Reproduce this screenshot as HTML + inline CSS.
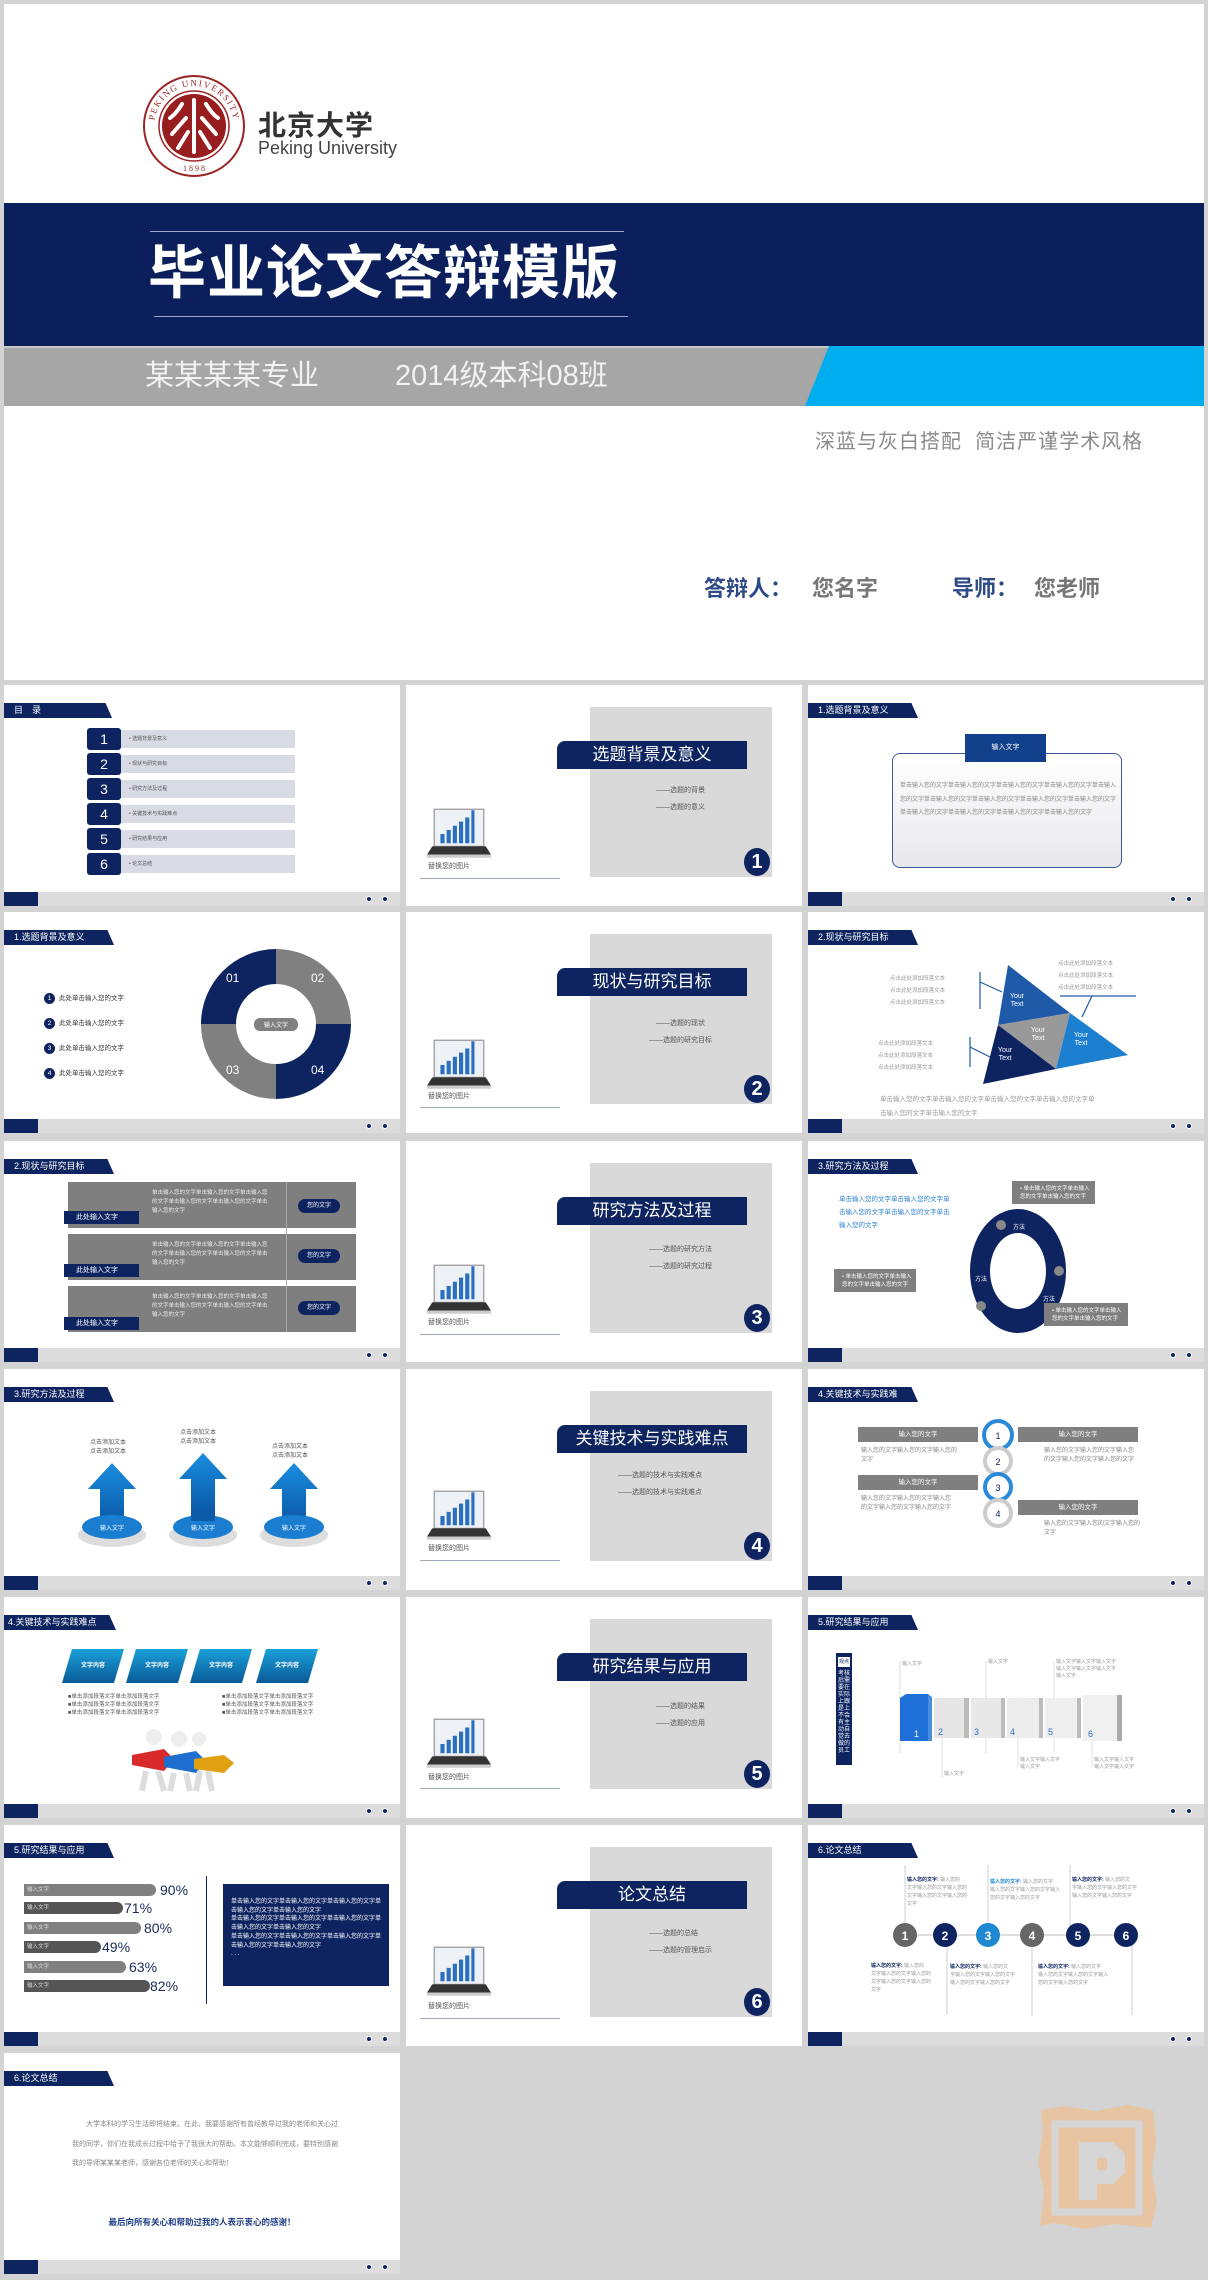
<!DOCTYPE html>
<html><head><meta charset="utf-8">
<style>
*{margin:0;padding:0;box-sizing:border-box}
body{width:1208px;height:2280px;background:#d3d3d3;position:relative;overflow:hidden;font-family:"Liberation Sans","Noto Sans CJK SC",sans-serif}
.a{position:absolute}
.t{position:absolute;width:396px;height:221px;background:#fff;overflow:hidden}
.hd{position:absolute;left:0;top:18px;height:15px;width:110px;background:#0d2460;color:#fff;font-size:9px;line-height:15px;padding-left:10px;clip-path:polygon(0 0,94% 0,100% 100%,0 100%);white-space:nowrap}
.ft{position:absolute;left:0;top:207px;width:396px;height:14px;background:#dcdcdc}
.ft:before{content:"";position:absolute;left:0;top:0;width:34px;height:14px;background:#0d2460}
.dot{position:absolute;top:4px;width:6px;height:6px;border-radius:50%;background:#0d2460;border:1px solid #fff}
.g{color:#888;font-size:6px;line-height:9px}
.w{color:#fff}
.nv{background:#0d2460}
.sec .gr{position:absolute;left:184px;top:22px;width:182px;height:170px;background:#d9d9d9}
.sec .tb{position:absolute;left:151px;top:56px;width:190px;height:28px;background:#0d2460;color:#fff;font-size:17px;line-height:28px;text-align:center;border-top-left-radius:8px}
.sec .si{position:absolute;left:240px;font-size:7px;color:#555}
.sec .nc{position:absolute;left:338px;top:163px;width:26px;height:28px;border-radius:50%;background:#0d2460;color:#fff;font-size:20px;font-weight:bold;text-align:center;line-height:28px}
.sec .cap{position:absolute;left:22px;top:176px;font-size:7px;color:#555}
.sec .ln{position:absolute;left:14px;top:193px;width:140px;height:1px;background:#a0a8c0}
</style></head><body>

<div class="a" style="left:4px;top:4px;width:1200px;height:676px;background:#fff">
  <svg class="a" style="left:138px;top:70px" width="104" height="104" viewBox="0 0 104 104">
    <defs><path id="arcT" d="M12 52 A40 40 0 0 1 92 52"/><path id="arcB" d="M20 60 A33 33 0 0 0 84 60"/></defs>
    <circle cx="52" cy="52" r="50" fill="#fff" stroke="#9b2424" stroke-width="2"/>
    <circle cx="52" cy="52" r="35" fill="#fff" stroke="#9b2424" stroke-width="1.5"/>
    <circle cx="52" cy="52" r="32" fill="#981d1f"/>
    <g stroke="#fff" stroke-width="4" fill="none" stroke-linecap="round">
      <path d="M52 26 V78"/><path d="M40 30 Q34 40 28 44"/><path d="M64 30 Q70 40 76 44"/>
      <path d="M44 44 L30 60"/><path d="M60 44 L74 60"/><path d="M46 58 L36 74"/><path d="M58 58 L68 74"/>
    </g>
    <text font-size="9" fill="#9b2424" font-family="Liberation Serif" letter-spacing="1.5"><textPath href="#arcT" startOffset="50%" text-anchor="middle">PEKING UNIVERSITY</textPath></text>
    <text x="52" y="97" font-size="8" fill="#9b2424" text-anchor="middle" font-family="Liberation Serif">1 8 9 8</text>
  </svg>
  <div class="a" style="left:254px;top:100px;font-size:28px;font-weight:bold;color:#333;letter-spacing:1px">北京大学</div>
  <div class="a" style="left:254px;top:134px;font-size:18px;color:#444">Peking University</div>
  <div class="a nv" style="left:0;top:199px;width:1200px;height:143px;background:#0b1f5c"></div>
  <div class="a" style="left:146px;top:227px;width:474px;height:1px;background:#9aa6c8"></div>
  <div class="a" style="left:150px;top:312px;width:474px;height:1px;background:#9aa6c8"></div>
  <div class="a" style="left:144px;top:234px;font-size:58px;font-weight:bold;color:#fff;letter-spacing:1px;line-height:72px">毕业论文答辩模版</div>
  <div class="a" style="left:0;top:342px;width:1200px;height:60px;background:#a6a6a6"></div>
  <div class="a" style="left:0;top:342px;width:1200px;height:2px;background:#c8c8c8"></div>
  <div class="a" style="left:801px;top:342px;width:399px;height:60px;background:#00aeef;clip-path:polygon(24px 0,100% 0,100% 100%,0 100%)"></div>
  <div class="a" style="left:141px;top:353px;font-size:29px;color:#f2f2f2;line-height:38px">某某某某专业</div>
  <div class="a" style="left:391px;top:353px;font-size:29px;color:#f2f2f2;line-height:38px">2014级本科08班</div>
  <div class="a" style="left:811px;top:421px;font-size:20px;color:#8a8a8a;letter-spacing:1px">深蓝与灰白搭配&nbsp; 简洁严谨学术风格</div>
  <div class="a" style="left:700px;top:567px;font-size:22px;font-weight:bold;color:#2e4a86">答辩人：</div>
  <div class="a" style="left:808px;top:567px;font-size:22px;font-weight:bold;color:#777">您名字</div>
  <div class="a" style="left:948px;top:567px;font-size:22px;font-weight:bold;color:#2e4a86">导师：</div>
  <div class="a" style="left:1030px;top:567px;font-size:22px;font-weight:bold;color:#777">您老师</div>
</div>

<svg width="0" height="0" style="position:absolute"><defs>
<symbol id="lap" viewBox="0 0 64 52">
 <rect x="8" y="2" width="48" height="36" fill="#eef1f5" stroke="#999" stroke-width="1.2"/>
 <rect x="14" y="26" width="4" height="9" fill="#2a6fc0"/><rect x="20" y="22" width="4" height="13" fill="#2a6fc0"/>
 <rect x="26" y="18" width="4" height="17" fill="#2a6fc0"/><rect x="32" y="14" width="4" height="21" fill="#2a6fc0"/>
 <rect x="38" y="10" width="4" height="25" fill="#2a6fc0"/><rect x="44" y="3" width="3" height="32" fill="#2a6fc0"/>
 <path d="M6 38 H58 L63 46 H1 Z" fill="#333"/><rect x="1" y="46" width="62" height="3" fill="#ccc"/>
</symbol></defs></svg>

<div class="t" style="left:4px;top:685px">
  <div class="hd" style="width:108px">目　录</div>
  <div class="a" style="left:83px;top:43px">
    <div style="position:relative;height:146px">
      <div class="a nv w" style="left:0;top:0;width:34px;height:22px;font-size:14px;text-align:center;line-height:22px;border-radius:3px">1</div><div class="a" style="left:34px;top:2px;width:174px;height:18px;background:#d8dae4;font-size:5px;color:#555;line-height:18px;padding-left:8px">• 选题背景及意义</div>
      <div class="a nv w" style="left:0;top:25px;width:34px;height:22px;font-size:14px;text-align:center;line-height:22px;border-radius:3px">2</div><div class="a" style="left:34px;top:27px;width:174px;height:18px;background:#d8dae4;font-size:5px;color:#555;line-height:18px;padding-left:8px">• 现状与研究目标</div>
      <div class="a nv w" style="left:0;top:50px;width:34px;height:22px;font-size:14px;text-align:center;line-height:22px;border-radius:3px">3</div><div class="a" style="left:34px;top:52px;width:174px;height:18px;background:#d8dae4;font-size:5px;color:#555;line-height:18px;padding-left:8px">• 研究方法及过程</div>
      <div class="a nv w" style="left:0;top:75px;width:34px;height:22px;font-size:14px;text-align:center;line-height:22px;border-radius:3px">4</div><div class="a" style="left:34px;top:77px;width:174px;height:18px;background:#d8dae4;font-size:5px;color:#555;line-height:18px;padding-left:8px">• 关键技术与实践难点</div>
      <div class="a nv w" style="left:0;top:100px;width:34px;height:22px;font-size:14px;text-align:center;line-height:22px;border-radius:3px">5</div><div class="a" style="left:34px;top:102px;width:174px;height:18px;background:#d8dae4;font-size:5px;color:#555;line-height:18px;padding-left:8px">• 研究结果与应用</div>
      <div class="a nv w" style="left:0;top:125px;width:34px;height:22px;font-size:14px;text-align:center;line-height:22px;border-radius:3px">6</div><div class="a" style="left:34px;top:127px;width:174px;height:18px;background:#d8dae4;font-size:5px;color:#555;line-height:18px;padding-left:8px">• 论文总结</div>
    </div>
  </div>
  <div class="ft"><div class="dot" style="left:362px"></div><div class="dot" style="left:378px"></div></div>
</div>

<div class="t sec" style="left:406px;top:685px">
  <div class="gr"></div><div class="tb">选题背景及意义</div>
  <div class="si" style="top:100px;left:250px">——选题的背景</div><div class="si" style="top:117px;left:250px">——选题的意义</div>
  <div class="nc">1</div>
  <svg class="a" style="left:20px;top:122px" width="66" height="54"><use href="#lap"/></svg>
  <div class="cap">替换您的图片</div><div class="ln"></div>
</div>

<div class="t" style="left:808px;top:685px">
  <div class="hd">1.选题背景及意义</div>
  <div class="a" style="left:84px;top:68px;width:230px;height:115px;border:1.5px solid #3b5a9a;border-radius:8px;background:linear-gradient(#fff,#e8e8ec)"></div>
  <div class="a" style="left:157px;top:49px;width:81px;height:28px;background:#12408a;color:#fff;font-size:7px;text-align:center;line-height:28px">输入文字</div>
  <div class="a g" style="left:92px;top:95px;width:216px;line-height:13.5px">单击输入您的文字单击输入您的文字单击输入您的文字单击输入您的文字单击输入您的文字单击输入您的文字单击输入您的文字单击输入您的文字单击输入您的文字单击输入您的文字单击输入您的文字单击输入您的文字单击输入您的文字</div>
  <div class="ft"><div class="dot" style="left:362px"></div><div class="dot" style="left:378px"></div></div>
</div>

<div class="t" style="left:4px;top:912px">
  <div class="hd">1.选题背景及意义</div>
  <div class="a" style="left:40px;top:74px;font-size:6.5px;color:#333;line-height:25px">
    <div><span style="display:inline-block;width:11px;height:11px;border-radius:50%;background:#0d2460;color:#fff;text-align:center;line-height:11px;margin-right:4px">1</span>此处单击输入您的文字</div>
    <div><span style="display:inline-block;width:11px;height:11px;border-radius:50%;background:#0d2460;color:#fff;text-align:center;line-height:11px;margin-right:4px">2</span>此处单击输入您的文字</div>
    <div><span style="display:inline-block;width:11px;height:11px;border-radius:50%;background:#0d2460;color:#fff;text-align:center;line-height:11px;margin-right:4px">3</span>此处单击输入您的文字</div>
    <div><span style="display:inline-block;width:11px;height:11px;border-radius:50%;background:#0d2460;color:#fff;text-align:center;line-height:11px;margin-right:4px">4</span>此处单击输入您的文字</div>
  </div>
  <svg class="a" style="left:192px;top:32px" width="160" height="160" viewBox="0 0 160 160">
    <path d="M80 80 L80 5 A75 75 0 0 0 5 80 Z" fill="#0d2460"/>
    <path d="M80 80 L155 80 A75 75 0 0 0 80 5 Z" fill="#808080"/>
    <path d="M80 80 L5 80 A75 75 0 0 0 80 155 Z" fill="#808080"/>
    <path d="M80 80 L80 155 A75 75 0 0 0 155 80 Z" fill="#0d2460"/>
    <circle cx="80" cy="80" r="40" fill="#fff"/>
    <rect x="58" y="74" width="44" height="13" rx="6" fill="#808080"/>
    <text x="80" y="83" font-size="6" fill="#fff" text-anchor="middle">输入文字</text>
    <text x="30" y="38" font-size="12" fill="#fff">01</text><text x="115" y="38" font-size="12" fill="#fff">02</text>
    <text x="30" y="130" font-size="12" fill="#fff">03</text><text x="115" y="130" font-size="12" fill="#fff">04</text>
  </svg>
  <div class="ft"><div class="dot" style="left:362px"></div><div class="dot" style="left:378px"></div></div>
</div>

<div class="t sec" style="left:406px;top:912px">
  <div class="gr"></div><div class="tb">现状与研究目标</div>
  <div class="si" style="top:106px;left:250px">——选题的现状</div><div class="si" style="top:123px;left:243px">——选题的研究目标</div>
  <div class="nc">2</div>
  <svg class="a" style="left:20px;top:126px" width="66" height="54"><use href="#lap"/></svg>
  <div class="cap" style="top:179px">替换您的图片</div><div class="ln" style="top:195px"></div>
</div>

<div class="t" style="left:808px;top:912px">
  <div class="hd">2.现状与研究目标</div>
  <svg class="a" style="left:0;top:0" width="396" height="221">
    <polygon points="200,53 262,101 190,113" fill="#1f5aa8"/>
    <polygon points="190,113 262,101 248,157" fill="#999"/>
    <polygon points="262,101 320,143 248,157" fill="#1d7fd0"/>
    <polygon points="190,113 248,157 175,172" fill="#0d2460"/>
    <g stroke="#1f5aa8" stroke-width="1.2"><path d="M172 60 V97 M172 70 L194 80"/><path d="M162 125 V155 M162 135 L182 145"/><path d="M252 84 H328 M284 84 L274 105"/></g>
    <g font-size="5.5" fill="#999"><text x="82" y="68">点击此处添加段落文本</text><text x="82" y="80">点击此处添加段落文本</text><text x="82" y="92">点击此处添加段落文本</text>
    <text x="70" y="133">点击此处添加段落文本</text><text x="70" y="145">点击此处添加段落文本</text><text x="70" y="157">点击此处添加段落文本</text>
    <text x="250" y="53">点击此处添加段落文本</text><text x="250" y="65">点击此处添加段落文本</text><text x="250" y="77">点击此处添加段落文本</text></g>
    <g font-size="7" fill="#fff" text-anchor="middle"><text x="209" y="86">Your</text><text x="209" y="94">Text</text><text x="230" y="120">Your</text><text x="230" y="128">Text</text><text x="273" y="125">Your</text><text x="273" y="133">Text</text><text x="197" y="140">Your</text><text x="197" y="148">Text</text></g>
    <text x="72" y="189" font-size="6.5" fill="#999">单击输入您的文字单击输入您的文字单击输入您的文字单击输入您的文字单</text>
    <text x="72" y="203" font-size="6.5" fill="#999">击输入您的文字单击输入您的文字</text>
  </svg>
  <div class="ft"><div class="dot" style="left:362px"></div><div class="dot" style="left:378px"></div></div>
</div>

<div class="t" style="left:4px;top:1141px">
  <div class="hd">2.现状与研究目标</div>
  <div class="a" style="left:64px;top:41px;width:288px;height:46px;background:#7f7f7f"></div>
  <div class="a" style="left:64px;top:93px;width:288px;height:46px;background:#7f7f7f"></div>
  <div class="a" style="left:64px;top:145px;width:288px;height:46px;background:#7f7f7f"></div>
  <div class="a g w" style="left:148px;top:48px;width:120px;color:#eee;font-size:5.5px;line-height:9px">单击输入您的文字单击输入您的文字单击输入您的文字单击输入您的文字单击输入您的文字单击输入您的文字</div>
  <div class="a g w" style="left:148px;top:100px;width:120px;color:#eee;font-size:5.5px;line-height:9px">单击输入您的文字单击输入您的文字单击输入您的文字单击输入您的文字单击输入您的文字单击输入您的文字</div>
  <div class="a g w" style="left:148px;top:152px;width:120px;color:#eee;font-size:5.5px;line-height:9px">单击输入您的文字单击输入您的文字单击输入您的文字单击输入您的文字单击输入您的文字单击输入您的文字</div>
  <div class="a" style="left:282px;top:41px;width:1px;height:150px;background:#aaa"></div>
  <div class="a nv w" style="left:60px;top:70px;width:75px;height:13px;font-size:7px;line-height:13px;padding-left:12px">此处输入文字</div>
  <div class="a nv w" style="left:60px;top:123px;width:75px;height:13px;font-size:7px;line-height:13px;padding-left:12px">此处输入文字</div>
  <div class="a nv w" style="left:60px;top:176px;width:75px;height:13px;font-size:7px;line-height:13px;padding-left:12px">此处输入文字</div>
  <div class="a nv w" style="left:294px;top:58px;width:42px;height:14px;border-radius:7px;font-size:6px;line-height:14px;text-align:center">您的文字</div>
  <div class="a nv w" style="left:294px;top:108px;width:42px;height:14px;border-radius:7px;font-size:6px;line-height:14px;text-align:center">您的文字</div>
  <div class="a nv w" style="left:294px;top:160px;width:42px;height:14px;border-radius:7px;font-size:6px;line-height:14px;text-align:center">您的文字</div>
  <div class="ft"><div class="dot" style="left:362px"></div><div class="dot" style="left:378px"></div></div>
</div>

<div class="t sec" style="left:406px;top:1141px">
  <div class="gr"></div><div class="tb">研究方法及过程</div>
  <div class="si" style="top:103px;left:243px">——选题的研究方法</div><div class="si" style="top:120px;left:243px">——选题的研究过程</div>
  <div class="nc">3</div>
  <svg class="a" style="left:20px;top:122px" width="66" height="54"><use href="#lap"/></svg>
  <div class="cap">替换您的图片</div><div class="ln"></div>
</div>

<div class="t" style="left:808px;top:1141px">
  <div class="hd">3.研究方法及过程</div>
  <div class="a" style="left:31px;top:52px;width:115px;font-size:6.5px;color:#2a7fd0;line-height:13px">单击输入您的文字单击输入您的文字单击输入您的文字单击输入您的文字单击输入您的文字</div>
  <svg class="a" style="left:155px;top:60px" width="110" height="140" viewBox="0 0 110 140">
    <ellipse cx="55" cy="70" rx="48" ry="62" fill="#0d2460"/>
    <ellipse cx="55" cy="70" rx="28" ry="38" fill="#fff"/>
    <circle cx="38" cy="24" r="5" fill="#888"/><circle cx="96" cy="70" r="5" fill="#888"/><circle cx="18" cy="105" r="5" fill="#888"/>
    <text x="50" y="28" font-size="6" fill="#fff">方法</text><text x="12" y="80" font-size="6" fill="#fff">方法</text><text x="80" y="100" font-size="6" fill="#fff">方法</text>
  </svg>
  <div class="a" style="left:204px;top:40px;width:83px;height:23px;background:#7f7f7f;color:#fff;font-size:5.5px;padding:4px 4px 0 8px;line-height:8px">• 单击输入您的文字单击输入您的文字单击输入您的文字</div>
  <div class="a" style="left:26px;top:128px;width:82px;height:23px;background:#7f7f7f;color:#fff;font-size:5.5px;padding:4px 4px 0 8px;line-height:8px">• 单击输入您的文字单击输入您的文字单击输入您的文字</div>
  <div class="a" style="left:236px;top:162px;width:84px;height:23px;background:#7f7f7f;color:#fff;font-size:5.5px;padding:4px 4px 0 8px;line-height:8px">• 单击输入您的文字单击输入您的文字单击输入您的文字</div>
  <div class="ft"><div class="dot" style="left:362px"></div><div class="dot" style="left:378px"></div></div>
</div>

<div class="t" style="left:4px;top:1369px">
  <div class="hd">3.研究方法及过程</div>
  <div class="a g" style="left:86px;top:70px;color:#555">点击添加文本<br>点击添加文本</div>
  <div class="a g" style="left:176px;top:60px;color:#555">点击添加文本<br>点击添加文本</div>
  <div class="a g" style="left:268px;top:74px;color:#555">点击添加文本<br>点击添加文本</div>
  <svg class="a" style="left:70px;top:80px" width="270" height="100" viewBox="0 0 270 100">
    <defs><linearGradient id="ab" x1="0" y1="0" x2="0" y2="1"><stop offset="0" stop-color="#1a8de0"/><stop offset="1" stop-color="#0a5aa8"/></linearGradient></defs>
    <g><path d="M38 14 L62 40 H50 V72 H26 V40 H14 Z" fill="url(#ab)"/><ellipse cx="38" cy="86" rx="34" ry="12" fill="#ddd"/><ellipse cx="38" cy="78" rx="30" ry="12" fill="#1a7dd0"/><text x="38" y="81" font-size="6" fill="#fff" text-anchor="middle">输入文字</text></g>
    <g transform="translate(91,-10)"><path d="M38 14 L62 40 H50 V72 H26 V40 H14 Z" fill="url(#ab)"/><ellipse cx="38" cy="96" rx="34" ry="12" fill="#ddd"/><ellipse cx="38" cy="88" rx="30" ry="12" fill="#1a7dd0"/><path d="M26 72 H50 V82 H26Z" fill="#0a5aa8"/><text x="38" y="91" font-size="6" fill="#fff" text-anchor="middle">输入文字</text></g>
    <g transform="translate(182,0)"><path d="M38 14 L62 40 H50 V72 H26 V40 H14 Z" fill="url(#ab)"/><ellipse cx="38" cy="86" rx="34" ry="12" fill="#ddd"/><ellipse cx="38" cy="78" rx="30" ry="12" fill="#1a7dd0"/><text x="38" y="81" font-size="6" fill="#fff" text-anchor="middle">输入文字</text></g>
  </svg>
  <div class="ft"><div class="dot" style="left:362px"></div><div class="dot" style="left:378px"></div></div>
</div>

<div class="t sec" style="left:406px;top:1369px">
  <div class="gr"></div><div class="tb">关键技术与实践难点</div>
  <div class="si" style="top:101px;left:212px">——选题的技术与实践难点</div><div class="si" style="top:118px;left:212px">——选题的技术与实践难点</div>
  <div class="nc">4</div>
  <svg class="a" style="left:20px;top:120px" width="66" height="54"><use href="#lap"/></svg>
  <div class="cap" style="top:174px">替换您的图片</div><div class="ln" style="top:191px"></div>
</div>

<div class="t" style="left:808px;top:1369px">
  <div class="hd">4.关键技术与实践难</div>
  <div class="a" style="left:50px;top:58px;width:120px;height:15px;background:#7f7f7f;color:#fff;font-size:6.5px;line-height:15px;text-align:center">输入您的文字</div>
  <div class="a" style="left:50px;top:106px;width:120px;height:15px;background:#7f7f7f;color:#fff;font-size:6.5px;line-height:15px;text-align:center">输入您的文字</div>
  <div class="a" style="left:210px;top:58px;width:120px;height:15px;background:#7f7f7f;color:#fff;font-size:6.5px;line-height:15px;text-align:center">输入您的文字</div>
  <div class="a" style="left:210px;top:131px;width:120px;height:15px;background:#7f7f7f;color:#fff;font-size:6.5px;line-height:15px;text-align:center">输入您的文字</div>
  <div class="a g" style="left:53px;top:78px;width:100px">输入您的文字输入您的文字输入您的文字</div>
  <div class="a g" style="left:53px;top:126px;width:90px">输入您的文字输入您的文字输入您的文字输入您的文字输入您的文字</div>
  <div class="a g" style="left:236px;top:78px;width:90px">输入您的文字输入您的文字输入您的文字输入您的文字输入您的文字</div>
  <div class="a g" style="left:236px;top:151px;width:100px">输入您的文字输入您的文字输入您的文字</div>
  <svg class="a" style="left:170px;top:48px" width="40" height="120" viewBox="0 0 40 120">
    <g font-size="9" text-anchor="middle" fill="#0d2460">
    <circle cx="20" cy="18" r="14" fill="#fff" stroke="#2a8ad8" stroke-width="4"/><text x="20" y="22">1</text>
    <circle cx="20" cy="44" r="13" fill="#fff" stroke="#ccc" stroke-width="4"/><text x="20" y="48">2</text>
    <circle cx="20" cy="70" r="13" fill="#fff" stroke="#2a8ad8" stroke-width="4"/><text x="20" y="74">3</text>
    <circle cx="20" cy="96" r="13" fill="#fff" stroke="#ccc" stroke-width="4"/><text x="20" y="100">4</text></g>
  </svg>
  <div class="ft"><div class="dot" style="left:362px"></div><div class="dot" style="left:378px"></div></div>
</div>

<div class="t" style="left:4px;top:1597px">
  <div class="hd" style="width:112px;padding-left:4px">4.关键技术与实践难点</div>
  <div class="a" style="left:58px;top:52px;width:256px;height:34px">
    <div class="a" style="left:0;top:0;width:62px;height:34px;background:linear-gradient(#1aa0d8,#0a5a98);clip-path:polygon(10px 0,100% 0,calc(100% - 10px) 100%,0 100%);color:#fff;font-size:6px;font-weight:bold;text-align:center;line-height:34px">文字内容</div>
    <div class="a" style="left:64px;top:0;width:62px;height:34px;background:linear-gradient(#1aa0d8,#0a5a98);clip-path:polygon(10px 0,100% 0,calc(100% - 10px) 100%,0 100%);color:#fff;font-size:6px;font-weight:bold;text-align:center;line-height:34px">文字内容</div>
    <div class="a" style="left:128px;top:0;width:62px;height:34px;background:linear-gradient(#1aa0d8,#0a5a98);clip-path:polygon(10px 0,100% 0,calc(100% - 10px) 100%,0 100%);color:#fff;font-size:6px;font-weight:bold;text-align:center;line-height:34px">文字内容</div>
    <div class="a" style="left:194px;top:0;width:62px;height:34px;background:linear-gradient(#1aa0d8,#0a5a98);clip-path:polygon(10px 0,100% 0,calc(100% - 10px) 100%,0 100%);color:#fff;font-size:6px;font-weight:bold;text-align:center;line-height:34px">文字内容</div>
  </div>
  <div class="a" style="left:64px;top:96px;font-size:5.5px;color:#555;line-height:8px">■单击添加段落文字单击添加段落文字<br>■单击添加段落文字单击添加段落文字<br>■单击添加段落文字单击添加段落文字</div>
  <div class="a" style="left:218px;top:96px;font-size:5.5px;color:#555;line-height:8px">■单击添加段落文字单击添加段落文字<br>■单击添加段落文字单击添加段落文字<br>■单击添加段落文字单击添加段落文字</div>
  <svg class="a" style="left:120px;top:128px" width="160" height="70" viewBox="0 0 160 70">
    <circle cx="30" cy="12" r="8" fill="#eee"/><circle cx="55" cy="14" r="8" fill="#eee"/><circle cx="75" cy="14" r="7" fill="#eee"/>
    <path d="M8 30 L40 24 L50 34 L40 46 L8 40Z" fill="#d82a2a"/>
    <path d="M40 32 L72 26 L82 36 L72 48 L40 42Z" fill="#1e6fd0"/>
    <path d="M70 34 L100 30 L110 38 L100 48 L70 44Z" fill="#e0a010"/>
    <path d="M22 46 L18 66 M34 46 L40 66 M50 48 L46 66 M62 48 L66 66 M76 46 L72 66 M84 46 L88 66" stroke="#ddd" stroke-width="6"/>
  </svg>
  <div class="ft"><div class="dot" style="left:362px"></div><div class="dot" style="left:378px"></div></div>
</div>

<div class="t sec" style="left:406px;top:1597px">
  <div class="gr"></div><div class="tb">研究结果与应用</div>
  <div class="si" style="top:104px;left:250px">——选题的结果</div><div class="si" style="top:121px;left:250px">——选题的应用</div>
  <div class="nc">5</div>
  <svg class="a" style="left:20px;top:120px" width="66" height="54"><use href="#lap"/></svg>
  <div class="cap" style="top:175px">替换您的图片</div><div class="ln" style="top:191px"></div>
</div>

<div class="t" style="left:808px;top:1597px">
  <div class="hd">5.研究结果与应用</div>
  <div class="a nv" style="left:28px;top:56px;width:16px;height:112px"></div>
  <div class="a" style="left:30px;top:60px;width:12px;height:10px;background:#fff;font-size:5px;text-align:center;line-height:10px;color:#0d2460">观点</div>
  <div class="a" style="left:30px;top:74px;width:13px;font-size:6px;color:#fff;line-height:7px;word-break:break-all">考核后需要在实际上跟是上不会有主动自觉去做的员工</div>
  <svg class="a" style="left:80px;top:60px" width="316" height="130" viewBox="0 0 316 130">
    <g stroke="#ccc" stroke-width="0.6"><path d="M12 4 V96"/><path d="M54 40 V120"/><path d="M98 4 V96"/><path d="M130 40 V110"/><path d="M166 4 V96"/><path d="M204 40 V110"/></g>
    <g font-size="5" fill="#999"><text x="14" y="8">输入文字</text><text x="100" y="6">输入文字</text><text x="168" y="6">输入文字输入文字输入文字</text><text x="168" y="13">输入文字输入文字输入文字</text><text x="168" y="20">输入文字</text><text x="56" y="118">输入文字</text><text x="132" y="104">输入文字输入文字</text><text x="132" y="111">输入文字</text><text x="206" y="104">输入文字输入文字</text><text x="206" y="111">输入文字输入文字</text></g>
    <polygon points="12,41 18,37 40,37 40,84 12,84" fill="#1e6fd8"/><polygon points="40,37 44,40 44,84 40,84" fill="#4a8ee0"/>
    <rect x="46" y="41" width="30" height="40" fill="#e6e6e6"/><rect x="76" y="41" width="5" height="40" fill="#bbb"/>
    <rect x="83" y="41" width="30" height="40" fill="#e8e8e8"/><rect x="113" y="41" width="4" height="40" fill="#bbb"/>
    <rect x="119" y="41" width="32" height="40" fill="#ececec"/><rect x="151" y="41" width="4" height="40" fill="#bbb"/>
    <rect x="157" y="41" width="32" height="40" fill="#eee"/><rect x="189" y="41" width="4" height="40" fill="#bbb"/>
    <rect x="195" y="38" width="34" height="46" fill="#f0f0f0"/><rect x="229" y="38" width="5" height="46" fill="#aaa"/>
    <g font-size="9" fill="#2a6fc8"><text x="26" y="80" fill="#fff">1</text><text x="50" y="78">2</text><text x="86" y="78">3</text><text x="122" y="78">4</text><text x="160" y="78">5</text><text x="200" y="80">6</text></g>
  </svg>
  <div class="ft"><div class="dot" style="left:362px"></div><div class="dot" style="left:378px"></div></div>
</div>

<div class="t" style="left:4px;top:1825px">
  <div class="hd">5.研究结果与应用</div>
  <div class="a" style="left:20px;top:59px;width:132px;height:12px;background:#808080;border-radius:0 6px 6px 0;color:#ddd;font-size:5.5px;line-height:12px;padding-left:3px">输入文字</div><div class="a" style="left:156px;top:57px;font-size:14px;color:#1a2a5a;line-height:16px">90%</div>
  <div class="a" style="left:20px;top:77px;width:99px;height:12px;background:#555;border-radius:0 6px 6px 0;color:#ddd;font-size:5.5px;line-height:12px;padding-left:3px">输入文字</div><div class="a" style="left:120px;top:75px;font-size:14px;color:#1a2a5a;line-height:16px">71%</div>
  <div class="a" style="left:20px;top:97px;width:117px;height:12px;background:#808080;border-radius:0 6px 6px 0;color:#ddd;font-size:5.5px;line-height:12px;padding-left:3px">输入文字</div><div class="a" style="left:140px;top:95px;font-size:14px;color:#1a2a5a;line-height:16px">80%</div>
  <div class="a" style="left:20px;top:116px;width:77px;height:12px;background:#555;border-radius:0 6px 6px 0;color:#ddd;font-size:5.5px;line-height:12px;padding-left:3px">输入文字</div><div class="a" style="left:98px;top:114px;font-size:14px;color:#1a2a5a;line-height:16px">49%</div>
  <div class="a" style="left:20px;top:136px;width:102px;height:12px;background:#808080;border-radius:0 6px 6px 0;color:#ddd;font-size:5.5px;line-height:12px;padding-left:3px">输入文字</div><div class="a" style="left:125px;top:134px;font-size:14px;color:#1a2a5a;line-height:16px">63%</div>
  <div class="a" style="left:20px;top:155px;width:126px;height:12px;background:#555;border-radius:0 6px 6px 0;color:#ddd;font-size:5.5px;line-height:12px;padding-left:3px">输入文字</div><div class="a" style="left:146px;top:153px;font-size:14px;color:#1a2a5a;line-height:16px">82%</div>
  <div class="a nv" style="left:202px;top:51px;width:1px;height:128px"></div>
  <div class="a nv" style="left:219px;top:59px;width:166px;height:102px;color:#fff;font-size:6px;line-height:8.7px;padding:14px 8px 0 8px">单击输入您的文字单击输入您的文字单击输入您的文字单击输入您的文字单击输入您的文字<br>单击输入您的文字单击输入您的文字单击输入您的文字单击输入您的文字单击输入您的文字<br>单击输入您的文字单击输入您的文字单击输入您的文字单击输入您的文字单击输入您的文字<br>. . .</div>
  <div class="ft"><div class="dot" style="left:362px"></div><div class="dot" style="left:378px"></div></div>
</div>

<div class="t sec" style="left:406px;top:1825px">
  <div class="gr"></div><div class="tb">论文总结</div>
  <div class="si" style="top:103px;left:243px">——选题的总结</div><div class="si" style="top:120px;left:243px">——选题的管理启示</div>
  <div class="nc">6</div>
  <svg class="a" style="left:20px;top:120px" width="66" height="54"><use href="#lap"/></svg>
  <div class="cap">替换您的图片</div><div class="ln"></div>
</div>

<div class="t" style="left:808px;top:1825px">
  <div class="hd">6.论文总结</div>
  <svg class="a" style="left:0;top:0" width="396" height="221">
    <g stroke="#bbb" stroke-width="0.7"><path d="M97 40 V110"/><path d="M180 40 V110"/><path d="M262 40 V110"/><path d="M139 110 V190"/><path d="M224 110 V190"/><path d="M324 110 V190"/></g>
    <path d="M90 110 H330" stroke="#bbb" stroke-width="1"/>
    <g font-size="12" font-weight="bold" fill="#fff" text-anchor="middle">
      <circle cx="97" cy="110" r="12" fill="#666"/><text x="97" y="115">1</text>
      <circle cx="137" cy="110" r="12" fill="#0d2460"/><text x="137" y="115">2</text>
      <circle cx="180" cy="110" r="12" fill="#1e88d0"/><text x="180" y="115">3</text>
      <circle cx="224" cy="110" r="12" fill="#666"/><text x="224" y="115">4</text>
      <circle cx="270" cy="110" r="12" fill="#0d2460"/><text x="270" y="115">5</text>
      <circle cx="318" cy="110" r="12" fill="#0d2460"/><text x="318" y="115">6</text>
    </g>
    <g font-size="5" fill="#999">
      <text x="99" y="56"><tspan fill="#0d2460" font-weight="bold">输入您的文字:</tspan> 输入您的</text><text x="99" y="64">文字输入您的文字输入您的</text><text x="99" y="72">文字输入您的文字输入您的</text><text x="99" y="80">文字</text>
      <text x="182" y="58"><tspan fill="#1e88d0" font-weight="bold">输入您的文字:</tspan> 输入您的文字</text><text x="182" y="66">输入您的文字输入您的文字输入</text><text x="182" y="74">您的文字输入您的文字</text>
      <text x="264" y="56"><tspan fill="#0d2460" font-weight="bold">输入您的文字:</tspan> 输入您的文</text><text x="264" y="64">字输入您的文字输入您的文字</text><text x="264" y="72">输入您的文字输入您的文字</text>
      <text x="63" y="142"><tspan fill="#0d2460" font-weight="bold">输入您的文字:</tspan> 输入您的</text><text x="63" y="150">文字输入您的文字输入您的</text><text x="63" y="158">文字输入您的文字输入您的</text><text x="63" y="166">文字</text>
      <text x="142" y="143"><tspan fill="#0d2460" font-weight="bold">输入您的文字:</tspan> 输入您的文</text><text x="142" y="151">字输入您的文字输入您的文字</text><text x="142" y="159">输入您的文字输入您的文字</text>
      <text x="230" y="143"><tspan fill="#0d2460" font-weight="bold">输入您的文字:</tspan> 输入您的文字</text><text x="230" y="151">输入您的文字输入您的文字输入</text><text x="230" y="159">您的文字输入您的文字</text>
    </g>
  </svg>
  <div class="ft"><div class="dot" style="left:362px"></div><div class="dot" style="left:378px"></div></div>
</div>

<div class="t" style="left:4px;top:2053px">
  <div class="hd">6.论文总结</div>
  <div class="a" style="left:68px;top:62px;width:266px;font-size:7px;color:#888;line-height:19.5px;text-indent:14px">大学本科的学习生活即将结束。在此，我要感谢所有曾经教导过我的老师和关心过我的同学，你们在我成长过程中给予了我很大的帮助。本文能够顺利完成，要特别感谢我的导师某某某老师，感谢各位老师的关心和帮助！</div>
  <div class="a" style="left:0;top:163px;width:396px;text-align:center;font-size:8.5px;font-weight:bold;color:#1e3e84">最后向所有关心和帮助过我的人表示衷心的感谢！</div>
  <div class="ft"><div class="dot" style="left:362px"></div><div class="dot" style="left:378px"></div></div>
</div>

<svg class="a" style="left:1035px;top:2102px" width="124" height="130" viewBox="0 0 124 130">
  <path d="M6 8 L30 4 L60 9 L92 3 L118 8 L121 40 L117 70 L122 100 L116 126 L80 122 L50 127 L20 121 L5 124 L9 90 L3 60 L8 30Z" fill="#e9c39d" opacity="0.9"/>
  <rect x="20" y="22" width="84" height="88" fill="none" stroke="#d6d6d6" stroke-width="7"/>
  <path d="M44 40 H78 L90 52 V70 L78 82 H62 V98 H44 Z M62 56 V68 H72 V56 Z" fill="#d6d6d6"/>
</svg>
</body></html>
